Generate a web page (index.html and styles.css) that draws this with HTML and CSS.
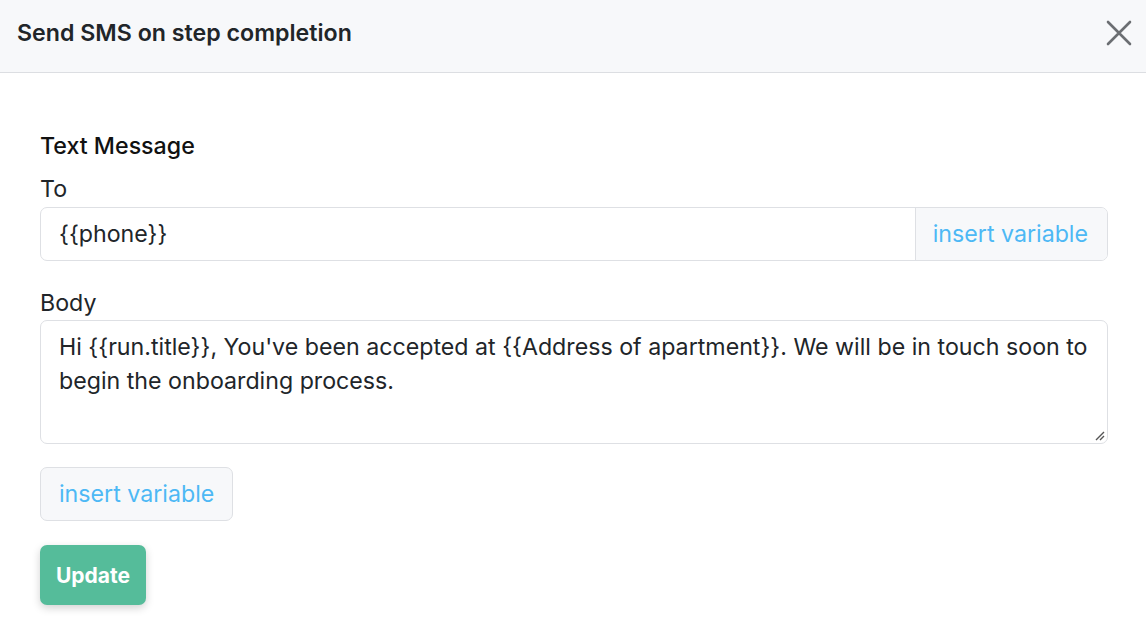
FILE: index.html
```html
<!DOCTYPE html>
<html>
<head>
<meta charset="utf-8">
<link rel="stylesheet" href="styles.css">
</head>
<body>
<div class="modal">
  <div class="modal-header">
    <h1 class="modal-title">Send SMS on step completion</h1>
    <button class="close" aria-label="Close">
      <svg width="26" height="26" viewBox="0 0 26 26"><path d="M2 2 L24 24 M24 2 L2 24" stroke="#6b6e72" stroke-width="2.6" stroke-linecap="round" fill="none"/></svg>
    </button>
  </div>
  <div class="modal-body">
    <div class="section-title">Text Message</div>
    <label class="label">To</label>
    <div class="input-group">
      <div class="input">{{phone}}</div>
      <div class="addon">insert variable</div>
    </div>
    <label class="label body-label">Body</label>
    <div class="textarea">Hi {{run.title}}, You've been accepted at {{Address of apartment}}. We will be in touch soon to begin the onboarding process.
      <svg class="grip" width="12" height="12" viewBox="0 0 12 12"><path d="M11 3 L3 11 M11 7 L7 11" stroke="#555" stroke-width="1.4" fill="none"/></svg>
    </div>
    <div class="var-btn">insert variable</div>
    <div class="update-btn">Update</div>
  </div>
</div>
</body>
</html>
```
FILE: styles.css
```css
html, body {
  margin: 0;
  padding: 0;
  background: #ffffff;
  font-family: Inter, "Noto Sans", sans-serif;
  color: #212529;
}
.modal {
  width: 1146px;
  height: 630px;
  overflow: hidden;
}
.modal-header {
  height: 73px;
  box-sizing: border-box;
  background: #f7f8fa;
  border-bottom: 1.5px solid #dcdee2;
  display: flex;
  align-items: center;
  justify-content: space-between;
  padding: 0 14px 0 17px;
}
.modal-title {
  margin: 0;
  font-size: 23.2px;
  font-weight: 600;
  color: #212529;
  padding-bottom: 7px;
}
.close {
  background: none;
  border: none;
  padding: 0;
  width: 26px;
  height: 26px;
  display: flex;
  margin-bottom: 6px;
}
.modal-body {
  padding: 57px 38px 0 40px;
  display: flex;
  flex-direction: column;
  align-items: flex-start;
}
.section-title {
  font-size: 23.2px;
  font-weight: 500;
  line-height: 33px;
  color: #111;
}
.label {
  font-size: 23.2px;
  line-height: 33px;
  margin-top: 10px;
  margin-bottom: 1px;
  color: #212529;
}
.body-label {
  margin-top: 26px;
  margin-bottom: 0;
}
.input-group {
  display: flex;
  width: 1068px;
  height: 54px;
  box-sizing: border-box;
  border: 1.5px solid #dee0e4;
  border-radius: 7px;
  overflow: hidden;
}
.input {
  flex: 1;
  display: flex;
  align-items: center;
  padding-left: 18px;
  font-size: 23.2px;
}
.addon {
  display: flex;
  align-items: center;
  padding: 0 19px 0 17px;
  background: #f7f8fa;
  border-left: 1.5px solid #dee0e4;
  color: #4db8f5;
  font-size: 23.2px;
}
.textarea {
  position: relative;
  width: 1068px;
  height: 124px;
  box-sizing: border-box;
  border: 1.5px solid #dee0e4;
  border-radius: 7px;
  padding: 9px 18px;
  font-size: 23.2px;
  line-height: 34px;
}
.grip {
  position: absolute;
  right: 2px;
  bottom: 2px;
}
.var-btn {
  margin-top: 23px;
  height: 54px;
  box-sizing: border-box;
  display: flex;
  align-items: center;
  padding: 0 18px;
  border: 1.5px solid #dee0e4;
  border-radius: 7px;
  background: #f7f8fa;
  color: #4db8f5;
  font-size: 23.2px;
}
.update-btn {
  margin-top: 24px;
  height: 60px;
  box-sizing: border-box;
  display: flex;
  align-items: center;
  padding: 0 16px;
  background: #55bc9a;
  border-radius: 7px;
  color: #fff;
  font-weight: 700;
  font-size: 21px;
  box-shadow: 0 3px 8px rgba(0,0,0,0.18);
}
```
